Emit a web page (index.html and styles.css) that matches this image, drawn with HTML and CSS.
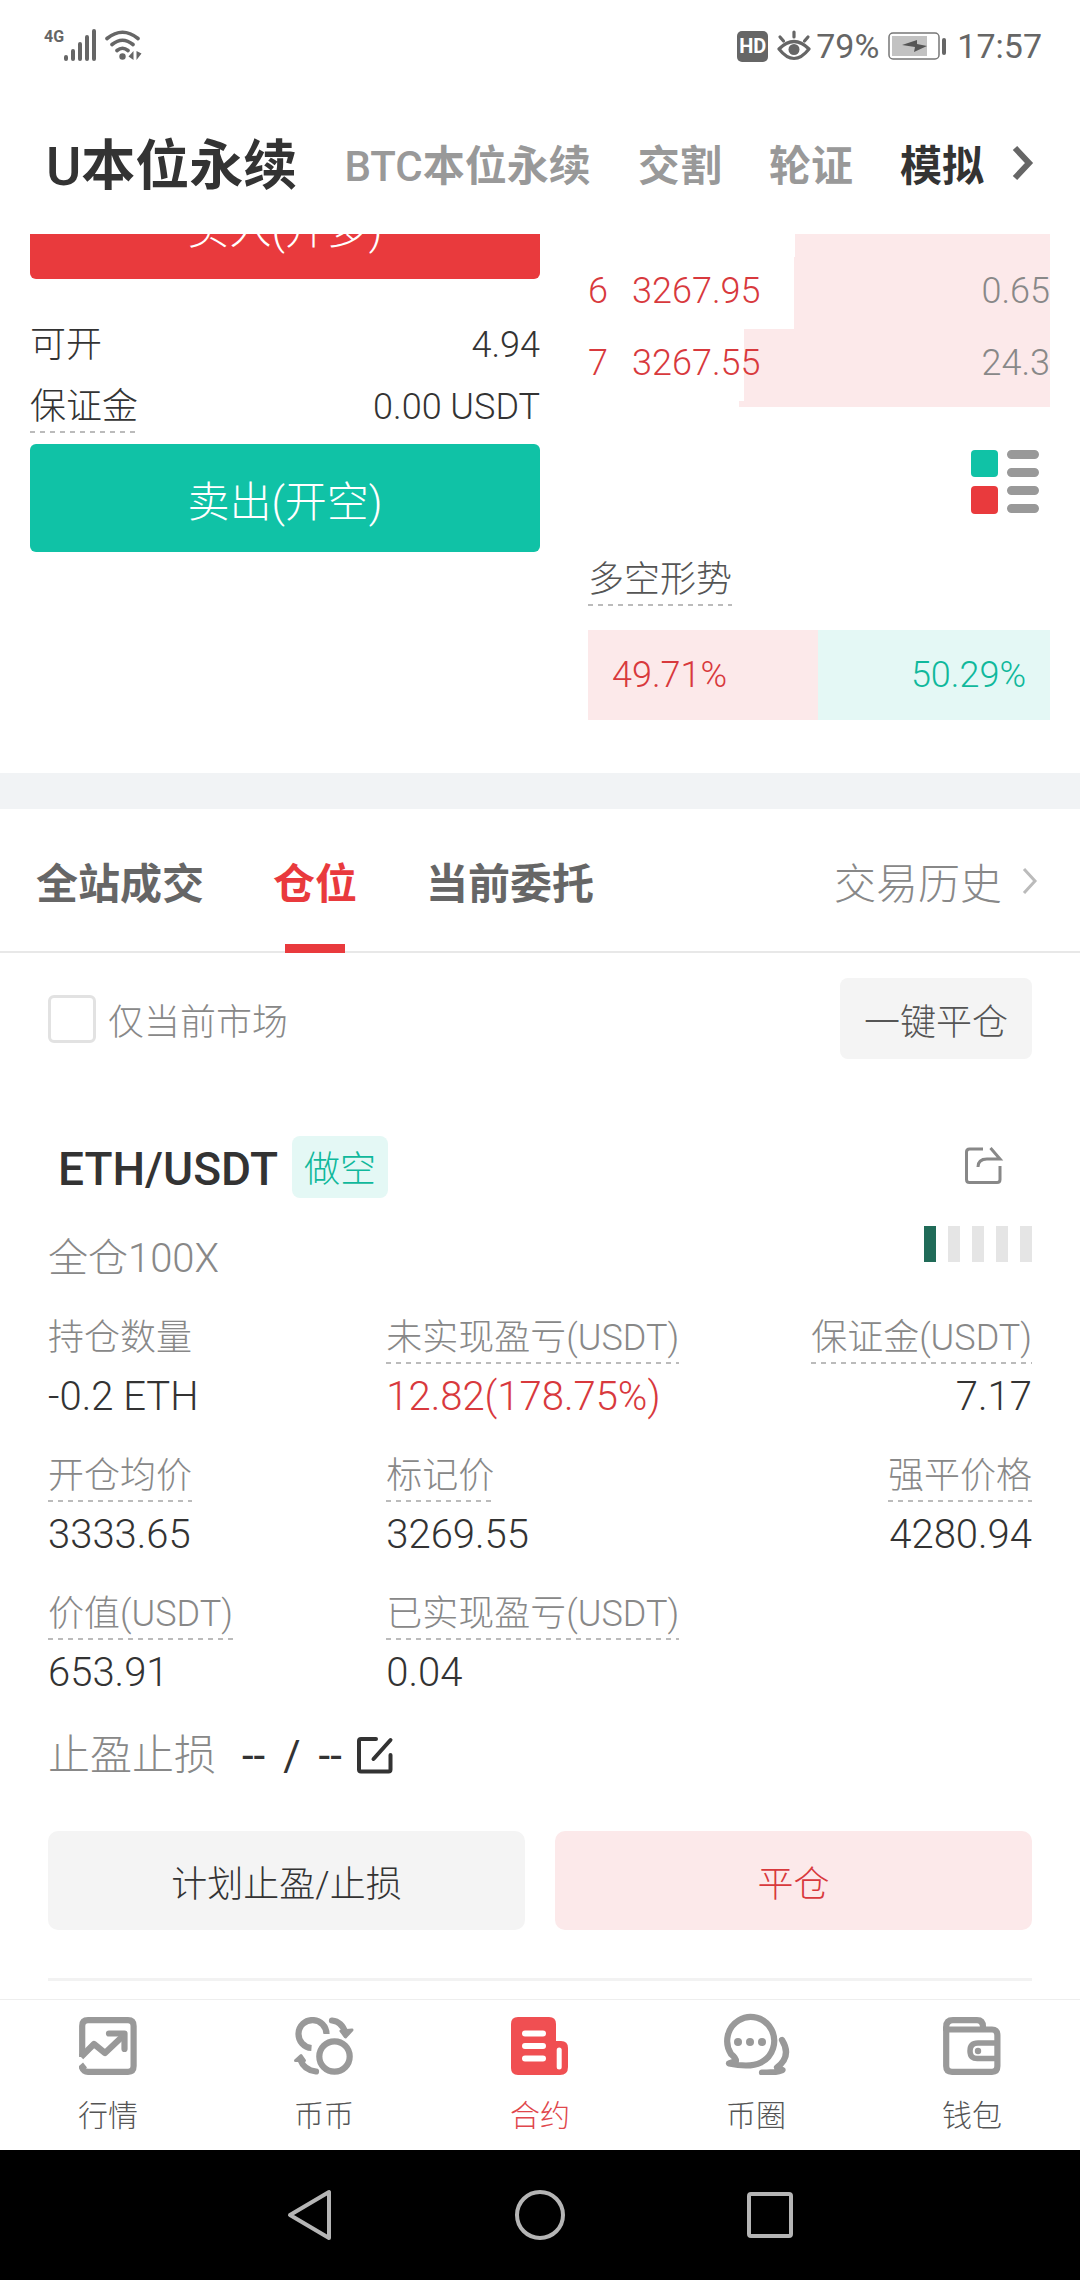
FILE: index.html
```
<!DOCTYPE html>
<html lang="zh-CN">
<head>
  <meta charset="UTF-8">
  <meta name="viewport" content="width=device-width, initial-scale=1.0">
  <title>U本位永续</title>
  <link rel="stylesheet" href="styles.css">
</head>
<body>
  <div class="status-bar">
    <div class="status-left">
      <span class="network">4G</span>
      <svg width="32" height="32" viewBox="0 0 32 32" fill="none" stroke="#666" stroke-width="4" stroke-linecap="round">
        <path d="M2 28v2M9 22v8M16 15v15M23 8v22M30 2v28"/>
      </svg>
      <svg class="wifi" width="38" height="32" viewBox="0 0 38 32" fill="none" stroke="#666" stroke-width="3.6" stroke-linecap="round">
        <path d="M3 9.500Q18.500-3 34 9.500M8 15.500Q18.500 7 29 15.500M13 21.500Q18.500 17 24 21.500"/>
        <circle cx="18.500" cy="27.500" r="3.200" fill="#666" stroke="none"/>
        <path d="M29.500 22v9l-5-3.500zM32.500 22v9l5-6.500z" fill="#666" stroke="none"/>
      </svg>
    </div>
    <div class="status-right">
      <span class="hd">HD</span>
      <svg width="34" height="32" viewBox="0 0 34 32" fill="none" stroke="#666" stroke-width="3.200" stroke-linecap="round">
        <path d="M2 19Q17 4 32 19Q17 38 2 19z" stroke-linejoin="round"/>
        <path d="M17 2v5M3 7l3.500 4M31 7l-3.500 4"/>
        <circle cx="17" cy="19.500" r="5.500" fill="#666" stroke="none"/>
      </svg>
      <span>79%</span>
      <svg class="battery" width="60" height="30" viewBox="0 0 60 30">
        <rect x="1" y="2" width="50" height="26" rx="4" fill="#fff" stroke="#777" stroke-width="1.500"/>
        <rect x="4" y="5" width="35" height="20" fill="#c2c2c2"/>
        <path d="M14 14l15-5v4l10 2-13 6 1-5z" fill="#555"/>
        <rect x="54" y="7" width="4" height="17" rx="2" fill="#666"/>
      </svg>
      <span>17:57</span>
    </div>
  </div>

  <header class="header">
    <nav class="market-tabs">
      <a href="#usdt" class="market current"><span class="latin">U</span>本位永续</a>
      <a href="#btc" class="market"><span class="latin">BTC</span>本位永续</a>
      <a href="#delivery" class="market">交割</a>
      <a href="#warrant" class="market">轮证</a>
      <a href="#demo" class="market dark">模拟</a>
    </nav>
    <svg width="22" height="36" viewBox="0 0 22 36" fill="none" stroke="#666" stroke-width="6">
      <path d="M3 3l14 15L3 33"/>
    </svg>
  </header>

  <main>
    <div class="scroller">
      <section class="trade">
        <div class="order-form">
          <button type="button" class="order-btn buy">买入(开多)</button>
          <div class="order-info">
            <div class="info-row"><span>可开</span><span>4.94</span></div>
            <div class="info-row"><span class="hint">保证金</span><span>0.00 USDT</span></div>
          </div>
          <button type="button" class="order-btn sell">卖出(开空)</button>
        </div>

        <div class="order-book">
          <div class="asks">
            <div class="ask"><span class="depth" style="width: 55.2%"></span></div>
            <div class="ask"><span class="depth" style="width: 55.4%"></span><span class="level">6</span><span class="price">3267.95</span><span class="amount">0.65</span></div>
            <div class="ask"><span class="depth" style="width: 66.2%"></span><span class="level">7</span><span class="price">3267.55</span><span class="amount">24.3</span></div>
            <div class="ask"><span class="depth" style="width: 67.3%"></span></div>
          </div>
          <button type="button" class="icon-btn book-mode">
            <svg width="68" height="64" viewBox="0 0 68 64">
              <rect width="27" height="27" rx="4" fill="#10c2a6"/>
              <rect y="36" width="27" height="28" rx="4" fill="#e93a3d"/>
              <path d="M40.500 4.500h23M40.500 22.500h23M40.500 40.500h23M40.500 58.500h23" stroke="#999" stroke-width="9" stroke-linecap="round"/>
            </svg>
          </button>
          <div><span class="hint sentiment">多空形势</span></div>
          <div class="ratio">
            <div class="long" style="width: 49.71%">49.71%</div>
            <div class="short">50.29%</div>
          </div>
        </div>
      </section>

      <section class="positions">
        <nav class="tabs">
          <a href="#trades" class="tab">全站成交</a>
          <a href="#positions" class="tab active">仓位</a>
          <a href="#orders" class="tab">当前委托</a>
          <a href="#history" class="history">交易历史
            <svg width="16" height="28" viewBox="0 0 16 28" fill="none" stroke="#bbb" stroke-width="3">
              <path d="M2 2l11 12L2 26"/>
            </svg>
          </a>
        </nav>

        <div class="filter">
          <input type="checkbox" id="current-only">
          <label for="current-only">仅当前市场</label>
          <button type="button" class="close-all">一键平仓</button>
        </div>

        <div class="position">
          <div class="position-head">
            <h2>ETH/USDT</h2>
            <span class="side">做空</span>
            <button type="button" class="icon-btn share">
              <svg width="40" height="40" viewBox="0 0 40 40" fill="none" stroke="#888" stroke-width="3">
                <path d="M19 2H5.500Q2.500 2 2.500 5V32.500Q2.500 35.500 5.500 35.500H33Q36 35.500 36 32.500V19"/>
                <path d="M14 20Q14 12 23 12H36L26.500 1"/>
              </svg>
            </button>
          </div>
          <div class="leverage">
            <span>全仓100X</span>
            <div class="risk"><i class="on"></i><i></i><i></i><i></i><i></i></div>
          </div>

          <div class="stats">
            <div class="stat"><span class="stat-label">持仓数量</span><span class="stat-value">-0.2 ETH</span></div>
            <div class="stat"><span class="stat-label hint">未实现盈亏(USDT)</span><span class="stat-value red">12.82(178.75%)</span></div>
            <div class="stat"><span class="stat-label hint">保证金(USDT)</span><span class="stat-value">7.17</span></div>
            <div class="stat"><span class="stat-label hint">开仓均价</span><span class="stat-value">3333.65</span></div>
            <div class="stat"><span class="stat-label hint">标记价</span><span class="stat-value">3269.55</span></div>
            <div class="stat"><span class="stat-label hint">强平价格</span><span class="stat-value">4280.94</span></div>
            <div class="stat"><span class="stat-label hint">价值(USDT)</span><span class="stat-value">653.91</span></div>
            <div class="stat"><span class="stat-label hint">已实现盈亏(USDT)</span><span class="stat-value">0.04</span></div>
          </div>

          <div class="stop">
            <span class="stop-label">止盈止损</span>
            <span class="stop-value"><span>--</span><span>/</span><span>--</span></span>
            <button type="button" class="icon-btn edit">
              <svg width="38" height="38" viewBox="0 0 38 38" fill="none" stroke="#333" stroke-width="4" stroke-linecap="round">
                <path d="M20 2H5Q3 2 3 4V32.500Q3 34.500 5 34.500H32.500Q34.500 34.500 34.500 32.500V18M34.500 3L17.500 22"/>
              </svg>
            </button>
          </div>

          <div class="actions">
            <button type="button" class="action">计划止盈/止损</button>
            <button type="button" class="action close">平仓</button>
          </div>
        </div>
      </section>
    </div>
  </main>

  <nav class="tab-bar">
    <a href="#market">
      <svg width="58" height="58" viewBox="0 0 58 58" fill="none" stroke="#999" stroke-width="6.200">
        <path d="M3.200 40V9Q3.200 3.200 9 3.200H49Q54.600 3.200 54.600 9V49Q54.600 54.800 49 54.800H9Q4.500 54.800 3 50.500L6 48"/>
        <path d="M2 40L15 27L26 36L45 18" stroke-linejoin="round"/>
        <path d="M30 16.500H45.500V32" stroke-linecap="round" stroke-linejoin="round"/>
      </svg>
      <span>行情</span>
    </a>
    <a href="#spot">
      <svg width="60" height="58" viewBox="0 0 60 58" fill="none" stroke="#999" stroke-width="6.200">
        <circle cx="40.500" cy="39.500" r="15.200"/>
        <path d="M32.500 17A14 14 0 1 0 17.500 31"/>
        <path d="M38 3.500Q48 4.500 51.500 16" stroke-linecap="round"/>
        <path d="M47 14l11-1-6.500 7z" fill="#999" stroke-width="3" stroke-linejoin="round"/>
        <path d="M22 54.500Q10 53 6.500 43" stroke-linecap="round"/>
        <path d="M1.500 43.500L7 38.500l3.500 5z" fill="#999" stroke-width="3" stroke-linejoin="round"/>
      </svg>
      <span>币币</span>
    </a>
    <a href="#contract" class="active">
      <svg width="58" height="58" viewBox="0 0 58 58" fill="none">
        <path d="M7 0H38Q45 0 45 7V24H50Q57 24 57 31V50Q57 58 49 58H7Q0 58 0 51V7Q0 0 7 0z" fill="#f04f52"/>
        <path d="M14 16.500H32M14 29H32M14 41.500H32" stroke="#fff" stroke-width="6" stroke-linecap="round"/>
        <path d="M48.200 33V50" stroke="#fff" stroke-width="5" stroke-linecap="round"/>
      </svg>
      <span>合约</span>
    </a>
    <a href="#community">
      <svg width="68" height="62" viewBox="0 0 68 62" fill="none" stroke="#999" stroke-width="6.200" stroke-linecap="round" stroke-linejoin="round">
        <path d="M7 50.500Q28 55 39 49.500A23.500 24 0 1 0 9 41Q14 45 14 48z"/>
        <path d="M60 27Q70 43 55 54.500L60.500 57Q51 60.500 40 59.500"/>
        <g fill="#999" stroke="none"><circle cx="16" cy="29" r="4"/><circle cx="28" cy="29" r="4"/><circle cx="40" cy="29" r="4"/></g>
      </svg>
      <span>币圈</span>
    </a>
    <a href="#wallet">
      <svg width="58" height="58" viewBox="0 0 58 58" fill="none" stroke="#999" stroke-width="6.200">
        <path d="M3.200 12.500V49Q3.200 54.800 9 54.800H49Q54.400 54.800 54.400 49V18.500Q54.400 12.500 49 12.500z"/>
        <path d="M3.200 14V10Q3.200 3.200 10 3.200H34Q40 3.200 40 10V12"/>
        <path d="M54 26H35Q27 26 27 34T35 41.500H54" stroke-width="5.500"/>
        <circle cx="35" cy="34" r="3.200" fill="#999" stroke="none"/>
      </svg>
      <span>钱包</span>
    </a>
  </nav>

  <div class="system-nav">
    <svg width="46" height="52" viewBox="0 0 46 52" fill="none" stroke="#b5b5b5" stroke-width="4" stroke-linejoin="round">
      <path d="M42 3V49L3 26z"/>
    </svg>
    <svg width="52" height="52" viewBox="0 0 52 52" fill="none" stroke="#b5b5b5" stroke-width="4">
      <circle cx="26" cy="26" r="23"/>
    </svg>
    <svg width="46" height="46" viewBox="0 0 46 46" fill="none" stroke="#b5b5b5" stroke-width="4">
      <rect x="2" y="2" width="42" height="42" rx="2"/>
    </svg>
  </div>
</body>
</html>
```

FILE: styles.css
```
* {
  box-sizing: border-box;
}
body {
  display: flex;
  flex-direction: column;
  min-height: 100vh;
  margin: 0;
  background-color: #fff;
  color: #333;
  font-family: Roboto, "Noto Sans CJK SC", sans-serif;
  font-size: 36px;
  font-weight: 300;
}
a {
  color: inherit;
  text-decoration: none;
}
button {
  border: none;
  padding: 0;
  font: inherit;
  color: inherit;
  cursor: pointer;
}
svg {
  display: block;
  flex: none;
}
.icon-btn {
  background: none;
}
.red {
  color: #d8393d;
}

/* status bar */
.status-bar {
  display: flex;
  justify-content: space-between;
  height: 92px;
  padding: 0 38px 0 44px;
  color: #666;
}
.status-left {
  display: flex;
  padding-top: 29px;
}
.network {
  font-size: 16px;
  line-height: 16px;
  font-weight: 700;
}
.wifi {
  margin-left: 8px;
}
.status-right {
  display: flex;
  align-items: center;
  gap: 5px;
  font-size: 34px;
  font-weight: 400;
}
.hd {
  width: 31px;
  margin-right: 4px;
  border-radius: 5px;
  background-color: #666;
  color: #fff;
  font-size: 20px;
  line-height: 31px;
  font-weight: 700;
  text-align: center;
}
.battery {
  margin: 0 4px;
}

/* market tabs */
.header {
  display: flex;
  align-items: center;
  height: 142px;
  padding: 0 46px;
}
.market-tabs {
  flex: 1;
  display: flex;
  align-items: center;
  justify-content: space-between;
  margin-right: 28px;
  padding-top: 8px;
  line-height: 60px;
}
.market {
  color: #999;
  font-size: 42px;
  font-weight: 700;
}
.market.current {
  color: #333;
  font-size: 54px;
}
.market.dark {
  color: #333;
}
.latin {
  font-weight: 500;
}

main {
  flex: 1;
  overflow: hidden;
}
/* the list is scrolled part of the way under the tabs */
.scroller {
  margin-top: -63px;
}

/* order form and order book */
.trade {
  display: flex;
  gap: 48px;
  padding: 0 30px 53px;
}
.order-form {
  flex: 510;
}
.order-book {
  flex: 462;
}
.order-btn {
  display: block;
  width: 100%;
  height: 108px;
  border-radius: 6px;
  color: #fff;
  font-size: 42px;
}
.buy {
  background-color: #e93a3d;
}
.sell {
  background-color: #10c2a6;
}
.order-info {
  padding: 35px 0 6px;
}
.info-row {
  display: flex;
  align-items: center;
  justify-content: space-between;
  height: 62px;
  line-height: 62px;
}
.hint {
  display: inline-block;
  line-height: 52px;
  background: repeating-linear-gradient(to right, #bbb 0, #bbb 5px, transparent 5px, transparent 10px) left bottom / 100% 2px no-repeat;
}
.asks {
  height: 236px;
  padding-top: 14px;
  overflow: hidden;
}
.ask {
  display: flex;
  position: relative;
  height: 72px;
  line-height: 68px;
  color: #d8393d;
}
.depth {
  position: absolute;
  top: 0;
  right: 0;
  bottom: 0;
  z-index: -1;
  background-color: #fce9ea;
}
.level {
  width: 44px;
}
.amount {
  margin-left: auto;
  color: #888;
}
.book-mode {
  display: block;
  margin: 43px 11px 40px auto;
}
.sentiment {
  color: #555;
}
.ratio {
  display: flex;
  margin-top: 24px;
  line-height: 90px;
}
.long {
  padding-left: 24px;
  background-color: #fce9ea;
  color: #d8393d;
}
.short {
  flex: 1;
  padding-right: 24px;
  background-color: #e4f8f5;
  color: #10b89c;
  text-align: right;
}

/* positions */
.positions {
  border-top: 36px solid #f1f3f5;
}
.tabs {
  display: flex;
  gap: 69px;
  height: 144px;
  padding: 0 42px 0 36px;
  border-bottom: 2px solid #e8e8e8;
  font-size: 42px;
  line-height: 152px;
}
.tab {
  position: relative;
  height: 144px;
  color: #666;
  font-weight: 700;
}
.tab.active {
  color: #e93a3d;
}
.tab.active::after {
  content: "";
  position: absolute;
  left: 50%;
  bottom: 0;
  width: 60px;
  height: 9px;
  margin-left: -30px;
  background-color: #e93a3d;
}
.history {
  display: flex;
  align-items: center;
  gap: 20px;
  height: 152px;
  margin-left: auto;
  color: #888;
}
.history svg {
  margin-bottom: 8px;
}
.filter {
  display: flex;
  align-items: center;
  padding: 25px 48px 0;
  color: #888;
}
.filter input {
  appearance: none;
  width: 48px;
  height: 48px;
  margin: 0 12px 0 0;
  border: 3px solid #e2e2e2;
  border-radius: 6px;
}
.close-all {
  height: 81px;
  margin-left: auto;
  padding: 0 24px;
  border-radius: 8px;
  background-color: #f4f4f4;
  color: #555;
}
.position {
  margin: 77px 48px 18px;
  padding-bottom: 48px;
  border-bottom: 3px solid #f2f2f2;
}
.position-head {
  display: flex;
  align-items: center;
}
h2 {
  margin: 0 14px 0 10px;
  padding-top: 4px;
  font-size: 46px;
  line-height: 58px;
  font-weight: 500;
}
.side {
  padding: 6px 12px 0;
  border-radius: 8px;
  background-color: #e4f8f5;
  color: #10b89c;
  line-height: 56px;
}
.share {
  margin: 0 28px 0 auto;
}
.leverage {
  display: flex;
  justify-content: space-between;
  padding-top: 28px;
  color: #888;
  font-size: 40px;
  line-height: 66px;
}
.risk {
  display: flex;
  gap: 12px;
}
.risk i {
  width: 12px;
  height: 36px;
  background-color: #e5e5e5;
}
.risk .on {
  background-color: #206b58;
}
.stats {
  display: grid;
  grid-template-columns: 11fr 11fr 10fr;
  row-gap: 20px;
  margin: 20px 0;
}
.stat {
  display: flex;
  flex-direction: column;
  align-items: flex-start;
}
.stat:nth-child(3n) {
  align-items: flex-end;
}
.stat-label {
  color: #888;
  line-height: 52px;
}
.stat-value {
  font-size: 40px;
  line-height: 66px;
}
.stop {
  display: flex;
  align-items: center;
  height: 60px;
  font-size: 42px;
  line-height: 60px;
}
.stop-label {
  margin-right: 26px;
  color: #888;
}
.stop-value {
  display: flex;
  gap: 18px;
  font-weight: 400;
}
.edit {
  margin-left: 14px;
}
.actions {
  display: flex;
  gap: 30px;
  margin-top: 45px;
}
.action {
  flex: 1;
  height: 99px;
  border-radius: 10px;
  background-color: #f4f4f4;
}
.action.close {
  background-color: #fce9ea;
  color: #d8393d;
}

/* app tab bar */
.tab-bar {
  display: flex;
  height: 151px;
  border-top: 1px solid #eee;
  color: #555;
  font-size: 30px;
  line-height: 42px;
}
.tab-bar a {
  flex: 1;
  display: flex;
  flex-direction: column;
  align-items: center;
  justify-content: flex-end;
  gap: 20px;
  padding-bottom: 13px;
}
.tab-bar .active {
  color: #e0474c;
}

.system-nav {
  display: flex;
  align-items: center;
  justify-content: center;
  gap: 181px;
  height: 130px;
  background-color: #000;
}
```
